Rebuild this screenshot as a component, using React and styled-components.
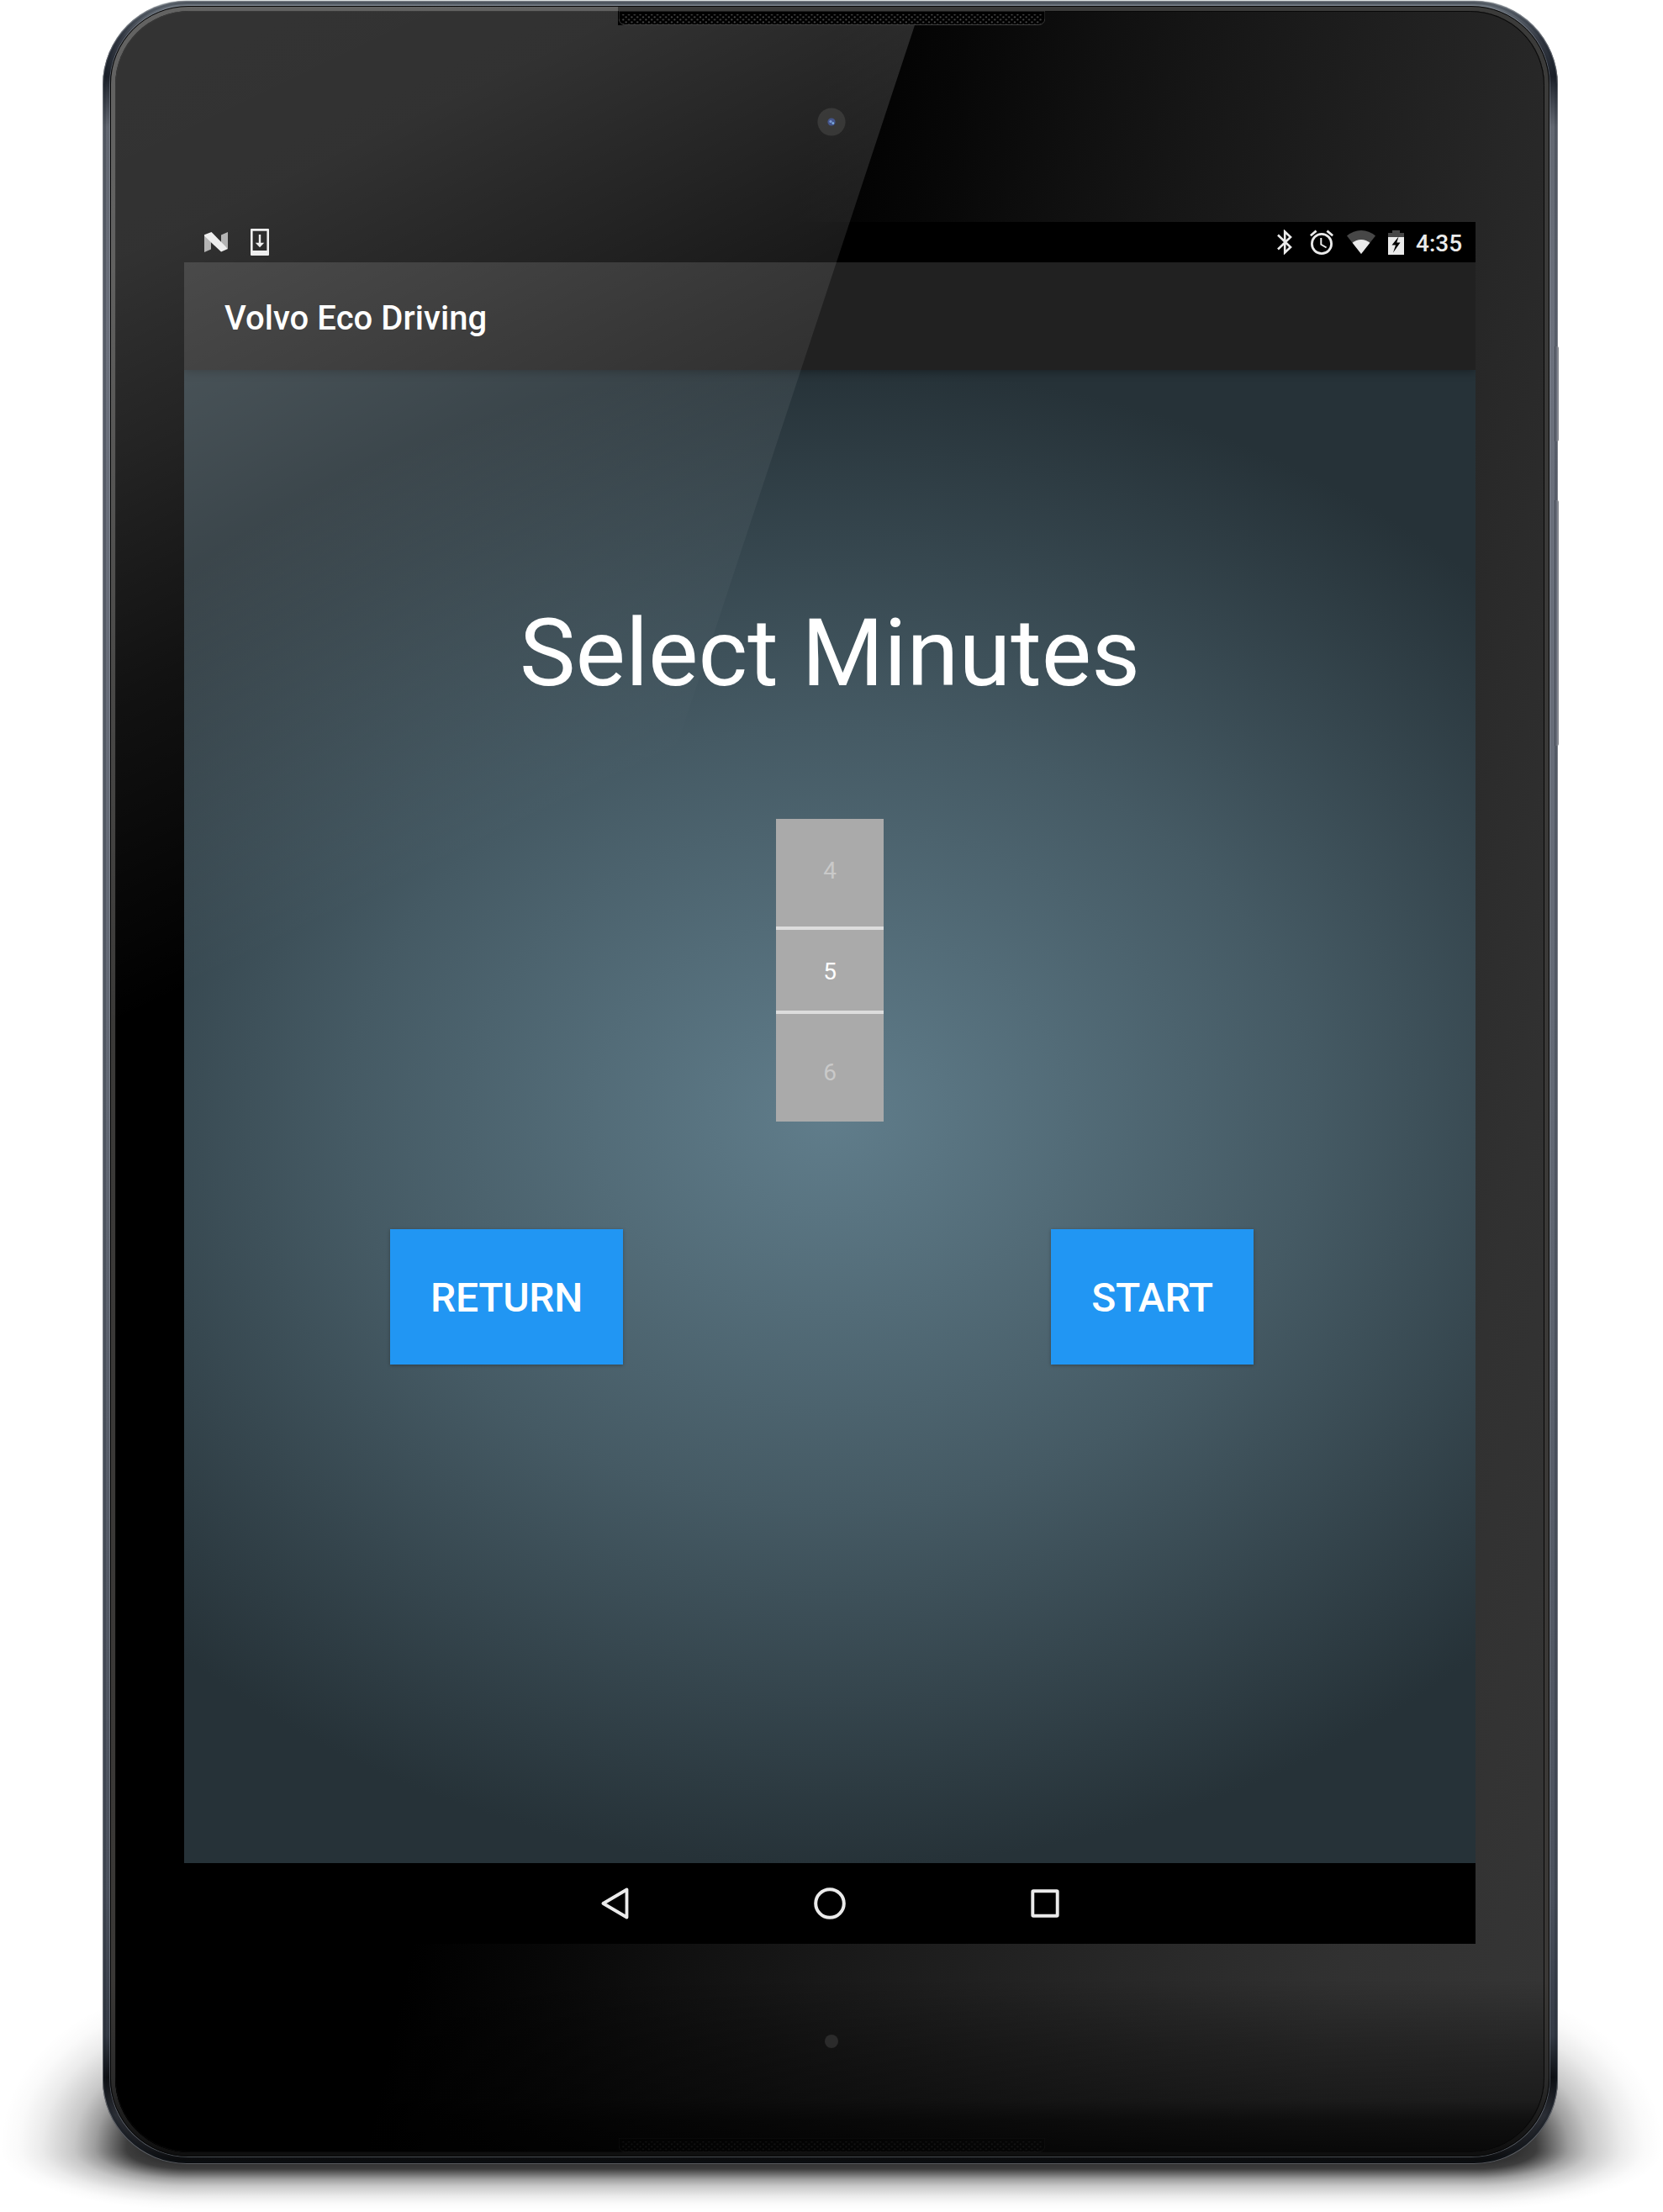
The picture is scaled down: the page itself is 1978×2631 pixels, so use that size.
import React from 'react';
import styled, { createGlobalStyle } from 'styled-components';

const GlobalStyle = createGlobalStyle`
  *, *::before, *::after { box-sizing: border-box; }
  html, body { margin: 0; padding: 0; background: #fff; }
  body { font-family: Roboto, "Noto Sans", sans-serif; }
`;

const Stage = styled.div`
  position: relative;
  width: 1978px;
  height: 2631px;
  overflow: hidden;
  background: #fff;
  padding: 1px 0 0 122px;
`;

const fade = `rgba(0,0,0,.82) 0%, rgba(0,0,0,.8) 25%, rgba(0,0,0,.76) 33%, rgba(0,0,0,.56) 42%,
  rgba(0,0,0,.38) 50%, rgba(0,0,0,.22) 61%, rgba(0,0,0,.08) 78%, rgba(0,0,0,.02) 90%, transparent 100%`;

const GroundShadow = styled.div`
  position: absolute;
  left: 0;
  top: 2366px;
  width: 1978px;
  height: 265px;
  background:
    radial-gradient(ellipse 225px 190px at 100% 100%, ${fade}) 0 0 / 225px 190px no-repeat,
    radial-gradient(ellipse 225px 72px at 100% 0, ${fade}) 0 190px / 225px 75px no-repeat,
    radial-gradient(ellipse 225px 190px at 0 100%, ${fade}) 100% 0 / 225px 190px no-repeat,
    radial-gradient(ellipse 225px 72px at 0 0, ${fade}) 100% 190px / 225px 75px no-repeat,
    linear-gradient(180deg, ${fade}) 225px 190px / 1528px 72px no-repeat;
`;

const SideKey = styled.div`
  position: absolute;
  left: 1849px;
  top: ${(p) => p.$top}px;
  width: 5px;
  height: ${(p) => p.$height}px;
  background: linear-gradient(90deg, #454a54 0 1px, #666b77 1px 3px, #85888f 3px);
  border-radius: 0 2px 2px 0;
`;

const Body = styled.div`
  position: relative;
  width: 1731px;
  height: 2573px;
  padding: 6px 10px 9px 9px;
  border-radius: 100px;
  background: linear-gradient(180deg,
    #5a6068 0, #687079 5px, #363b45 45px, #1b2029 90px, #626771 150px,
    #6b707c 400px, #626874 1300px, #4a505c 2250px, #343a45 2420px,
    #0c0e12 2470px, #2b2e35 2515px, #15171b 2555px, #070809 2573px);
  box-shadow:
    0 -1px 0 -0.4px #b9c3c3,
    inset 0 0 0 1px rgba(165, 168, 174, .5),
    inset 0 0 0 4px rgba(20, 28, 38, .22);
`;

const Lip = styled.div`
  position: relative;
  width: 100%;
  height: 100%;
  padding: 5px 5px 4px 5px;
  border: 1px solid #060606;
  border-radius: 93px;
  background: linear-gradient(180deg, #3b3b3a 0, #3a3836 2350px, #2a2a2a 2470px, #0f0f0f 2550px);
  box-shadow: 0 0 0 1px rgba(158, 164, 176, .4);
  overflow: hidden;
`;

const Glass = styled.div`
  display: flex;
  flex-direction: column;
  align-items: flex-start;
  width: 1700px;
  height: 2547px;
  padding-left: 82px;
  border-radius: 88px;
  overflow: hidden;
  position: relative;
`;

const GlassTint = styled.svg`
  position: absolute;
  left: 0;
  top: 0;
  width: 1700px;
  height: 2548px;
`;

const Gloss = styled.svg`
  position: absolute;
  z-index: 3;
  left: 0;
  top: 0;
  width: 1000px;
  height: 1300px;
  pointer-events: none;
`;

const Bezel = styled.div`
  position: relative;
  display: flex;
  flex-direction: column;
  align-items: center;
  justify-content: ${(p) => (p.$bottom ? 'flex-end' : 'flex-start')};
  width: 1540px;
  height: ${(p) => p.$height}px;
`;

const Speaker = styled.svg`
  display: block;
  width: 507px;
  height: 17px;
  opacity: ${(p) => p.$opacity};
`;

const Camera = styled.svg`
  display: block;
  width: 34px;
  height: 34px;
  margin-top: 98px;
`;

const Sensor = styled.div`
  width: 16px;
  height: 16px;
  margin-bottom: 107px;
  border-radius: 50%;
  background: #2b2b2b;
`;

const Screen = styled.main`
  position: relative;
  display: flex;
  flex-direction: column;
  flex: none;
  width: 1536px;
  height: 2048px;
  overflow: hidden;
  background: #000;
`;

const StatusBar = styled.div`
  display: flex;
  align-items: center;
  height: 48px;
  padding-left: 24px;
  background: #000;
  color: #ebebeb;
`;

const StatusIcon = styled.svg`
  display: block;
  flex: none;
  margin-left: ${(p) => p.$gap || 0}px;
`;

const StatusRight = styled.div`
  display: flex;
  align-items: center;
  width: 236px;
  margin-left: auto;
`;

const Clock = styled.span`
  margin-left: 14px;
  font-size: 28px;
  font-weight: 500;
  line-height: 33px;
  padding-top: 2px;
`;

const AppBar = styled.header`
  position: relative;
  z-index: 1;
  display: flex;
  align-items: center;
  height: 128px;
  padding: 5px 0 0 48px;
  background: #212121;
  box-shadow: 0 2px 10px rgba(0, 0, 0, .34);
`;

const AppTitle = styled.h1`
  margin: 0;
  color: #fff;
  font-size: 40px;
  font-weight: 500;
  line-height: 48px;
  letter-spacing: .06px;
  white-space: nowrap;
`;

const Content = styled.section`
  display: flex;
  flex-direction: column;
  align-items: center;
  height: 1776px;
  padding-top: 271px;
  background: radial-gradient(ellipse 1150px 930px at 50% 50%, #607d8b 0%, #455a64 50%, #263238 96%);
`;

const Heading = styled.h2`
  margin: 0;
  color: #fff;
  font-size: 112px;
  font-weight: 400;
  line-height: 132px;
  white-space: nowrap;
`;

const Picker = styled.div`
  display: flex;
  flex-direction: column;
  width: 128px;
  height: 360px;
  margin-top: 131px;
  background: linear-gradient(180deg,
    #aaa 0 128px, #ddd 128px 132px, #aaa 132px 228px, #ddd 228px 232px, #aaa 232px);
`;

const PickerItem = styled.div`
  display: flex;
  align-items: center;
  justify-content: center;
  height: 120px;
  padding-top: 4px;
  color: ${(p) => (p.$active ? '#fff' : '#c9c9c9')};
  font-size: 28px;
  line-height: 34px;
`;

const Actions = styled.div`
  display: flex;
  justify-content: space-between;
  width: 1027px;
  margin-top: 128px;
  margin-right: 19px;
`;

const ActionButton = styled.button`
  height: 161px;
  width: ${(p) => p.$width}px;
  padding: 3px 0 0;
  border: 0;
  background: #2196f3;
  color: #fff;
  font-family: inherit;
  font-size: 48px;
  font-weight: 500;
  line-height: 56px;
  letter-spacing: -.3px;
  box-shadow: 0 1px 4px rgba(0, 0, 0, .3);
`;

const NavBar = styled.nav`
  display: flex;
  justify-content: center;
  align-items: center;
  height: 96px;
  background: #000;
`;

const NavItem = styled.div`
  display: flex;
  justify-content: center;
  width: 256px;
`;

function SpeakerGrille({ id, opacity }) {
  return (
    <Speaker viewBox="0 0 507 17" $opacity={opacity}>
      <defs>
        <pattern id={id} width="6.8" height="6" patternUnits="userSpaceOnUse">
          <circle cx="1.8" cy="1.4" r="1.1" fill="#4a4a4a" />
          <circle cx="5.2" cy="4.4" r="1.1" fill="#4a4a4a" />
        </pattern>
      </defs>
      <path d="M0 0H507V9Q506 16.5 499 16.5H8Q1 16.5 0 9Z" fill="#000" stroke="#3c3c3c" strokeWidth="1" />
      <rect x="3" y="4" width="501" height="12" fill={`url(#${id})`} />
    </Speaker>
  );
}

function NougatIcon() {
  return (
    <StatusIcon width="28" height="24" viewBox="0 0 28 24">
      <path d="M0 4L8 9V20.500L0 24Z" fill="#a3a3a3" />
      <path d="M20 3.500L28 0V20L20 14Z" fill="#a3a3a3" />
      <path d="M0 3.300L8.500 0L28 20L20 23.600L0 4.500Z" fill="#ebebeb" />
    </StatusIcon>
  );
}

function InstallIcon() {
  return (
    <StatusIcon $gap={27} width="22" height="32" viewBox="0 0 22 32">
      <path fillRule="evenodd" fill="#ebebeb" d="M1 0H21Q22 0 22 1V31Q22 32 21 32H1Q0 32 0 31V1Q0 0 1 0ZM2.600 2.800V26H19.400V2.800Z" />
      <path fill="#ebebeb" d="M9.800 7H12.200V16.800H16.200L11 22.200L5.800 16.800H9.800Z" />
    </StatusIcon>
  );
}

function BluetoothIcon() {
  return (
    <StatusIcon width="18" height="30" viewBox="0 0 18 30">
      <path d="M1 6.500L16 21L9.200 27.500V2.500L16 9L1 23.500" fill="none" stroke="#ebebeb" strokeWidth="2.600" />
    </StatusIcon>
  );
}

function AlarmIcon() {
  return (
    <StatusIcon $gap={21} width="28" height="30" viewBox="0 0 28 30">
      <circle cx="14" cy="17" r="11.600" fill="none" stroke="#ebebeb" strokeWidth="2.800" />
      <path d="M13.300 10V17.800L19.600 21.500" fill="none" stroke="#ebebeb" strokeWidth="2" />
      <path d="M.8 7.300L7.600 1.600M27.200 7.300L20.400 1.600" stroke="#ebebeb" strokeWidth="2.800" />
    </StatusIcon>
  );
}

function WifiIcon() {
  return (
    <StatusIcon $gap={16} width="34" height="28" viewBox="0 0 34 28">
      <path d="M17 28L0 6.600Q7.500 0 17 0T34 6.600Z" fill="#474747" />
      <path d="M17 28L6.600 14.800Q11 11 17 11T27.400 14.800Z" fill="#ebebeb" />
    </StatusIcon>
  );
}

function BatteryIcon() {
  return (
    <StatusIcon $gap={15} width="19" height="29" viewBox="0 0 19 29">
      <path d="M5 0H14V3H19V9H0V3H5Z" fill="#474747" />
      <rect y="8" width="19" height="21" fill="#ebebeb" />
      <path d="M12.500 7.500L4.500 17.500H9L6 26.500L14.500 14.500H10.300L12.500 7.500Z" fill="#000" />
    </StatusIcon>
  );
}

export default function App() {
  return (
    <Stage>
      <GlobalStyle />
      <GroundShadow />
      <Body>
        <Lip>
          <Glass>
            <GlassTint viewBox="0 0 1700 2548">
              <defs>
                <linearGradient id="sheen" gradientUnits="userSpaceOnUse" x1="819" y1="198" x2="2112" y2="484">
                  <stop offset="0" stopColor="#000" />
                  <stop offset=".116" stopColor="#070707" />
                  <stop offset=".234" stopColor="#101010" />
                  <stop offset=".36" stopColor="#181818" />
                  <stop offset=".62" stopColor="#272727" />
                  <stop offset=".82" stopColor="#313131" />
                  <stop offset="1" stopColor="#353535" />
                </linearGradient>
                <linearGradient id="floor" gradientUnits="userSpaceOnUse" x1="0" y1="2340" x2="0" y2="2548">
                  <stop offset="0" stopColor="#000" stopOpacity="0" />
                  <stop offset=".37" stopColor="#000" stopOpacity=".28" />
                  <stop offset=".7" stopColor="#000" stopOpacity=".46" />
                  <stop offset=".81" stopColor="#000" stopOpacity=".7" />
                  <stop offset="1" stopColor="#000" stopOpacity=".84" />
                </linearGradient>
              </defs>
              <rect width="1700" height="2548" fill="#000" />
              <rect width="1700" height="2548" fill="url(#sheen)" />
              <rect y="2340" width="1700" height="208" fill="url(#floor)" />
              <rect x=".5" y=".5" width="1699" height="2546" rx="88" fill="none" stroke="#080808" />
            </GlassTint>
            <Bezel $height={251}>
              <SpeakerGrille id="grilleTop" opacity={1} />
              <Camera viewBox="0 0 34 34">
                <circle cx="17" cy="17" r="16.600" fill="#191918" />
                <circle cx="17" cy="17" r="4.600" fill="#263a78" />
                <circle cx="16" cy="16.500" r="1.600" fill="#6488cc" />
                <circle cx="18.800" cy="18.500" r="1.300" fill="#70aee8" />
              </Camera>
            </Bezel>
            <Screen>
              <StatusBar>
                <NougatIcon />
                <InstallIcon />
                <StatusRight>
                  <BluetoothIcon />
                  <AlarmIcon />
                  <WifiIcon />
                  <BatteryIcon />
                  <Clock>4:35</Clock>
                </StatusRight>
              </StatusBar>
              <AppBar>
                <AppTitle>Volvo Eco Driving</AppTitle>
              </AppBar>
              <Content>
                <Heading>Select Minutes</Heading>
                <Picker>
                  <PickerItem>4</PickerItem>
                  <PickerItem $active>5</PickerItem>
                  <PickerItem>6</PickerItem>
                </Picker>
                <Actions>
                  <ActionButton $width={277}>RETURN</ActionButton>
                  <ActionButton $width={241}>START</ActionButton>
                </Actions>
              </Content>
              <NavBar>
                <NavItem>
                  <svg width="33" height="38" viewBox="0 0 33 38">
                    <path d="M2.500 19L30.500 2.500V35.500Z" fill="none" stroke="#ebebeb" strokeWidth="3.800" strokeLinejoin="round" />
                  </svg>
                </NavItem>
                <NavItem>
                  <svg width="38" height="38" viewBox="0 0 38 38">
                    <circle cx="19" cy="19" r="16.800" fill="none" stroke="#ebebeb" strokeWidth="4" />
                  </svg>
                </NavItem>
                <NavItem>
                  <svg width="34" height="34" viewBox="0 0 34 34">
                    <rect x="2.300" y="2.300" width="29.400" height="29.400" rx=".8" fill="none" stroke="#ebebeb" strokeWidth="3.900" />
                  </svg>
                </NavItem>
              </NavBar>
            </Screen>
            <Bezel $height={248} $bottom>
              <Sensor />
              <SpeakerGrille id="grilleBottom" opacity={0.2} />
            </Bezel>
          </Glass>
          <Gloss viewBox="0 0 1000 1300">
            <defs>
              <linearGradient id="gloss" gradientUnits="userSpaceOnUse" x1="-131" y1="-8" x2="371" y2="1037">
                <stop offset="0" stopColor="#fff" stopOpacity=".205" />
                <stop offset=".29" stopColor="#fff" stopOpacity=".195" />
                <stop offset=".475" stopColor="#fff" stopOpacity=".14" />
                <stop offset=".6" stopColor="#fff" stopOpacity=".1" />
                <stop offset=".7" stopColor="#fff" stopOpacity=".07" />
                <stop offset=".92" stopColor="#fff" stopOpacity=".02" />
                <stop offset="1" stopColor="#fff" stopOpacity="0" />
              </linearGradient>
            </defs>
            <path fill="url(#gloss)" d="M0 0V1300H534L956 22H603V5H603V0Z" />
          </Gloss>
        </Lip>
      </Body>
      <SideKey $top={412} $height={113} />
      <SideKey $top={595} $height={292} />
    </Stage>
  );
}
